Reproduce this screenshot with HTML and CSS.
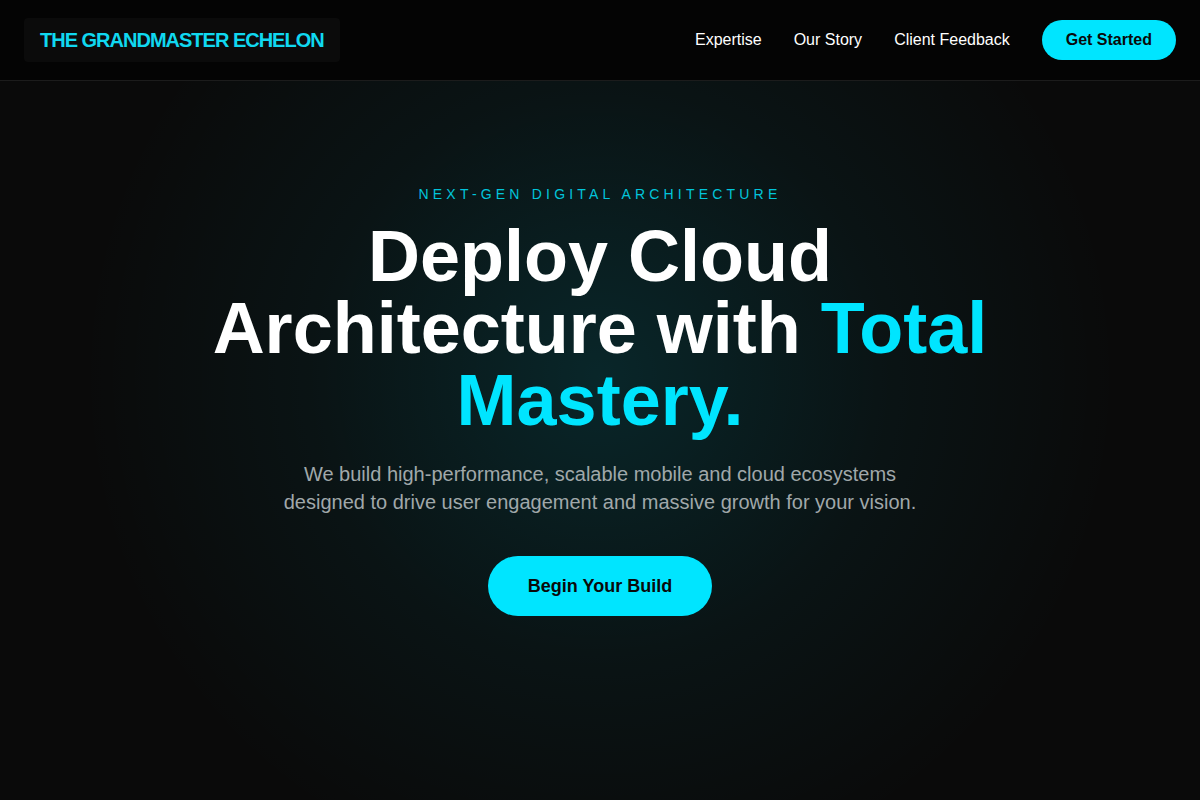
FILE: index.html
```html
<!DOCTYPE html>
<html lang="en">
<head>
  <meta charset="UTF-8" />
  <meta name="viewport" content="width=device-width, initial-scale=1.0"/>
  <title>The Grandmaster Echelon</title>
  <link rel="stylesheet" href="styles.css">
</head>
<body>
  <header class="navbar">
    <a class="logo" href="#">THE GRANDMASTER ECHELON</a>
    <nav class="nav-links">
      <a href="#expertise">Expertise</a>
      <a href="#story">Our Story</a>
      <a href="#feedback">Client Feedback</a>
      <a class="btn btn-small" href="#start">Get Started</a>
    </nav>
  </header>

  <section class="hero">
    <p class="eyebrow">Next-Gen Digital Architecture</p>
    <h1 class="hero-title">Deploy Cloud Architecture with <span class="accent">Total Mastery.</span></h1>
    <p class="hero-text">We build high-performance, scalable mobile and cloud ecosystems designed to drive user engagement and massive growth for your vision.</p>
    <a class="btn btn-large" href="#start">Begin Your Build</a>
  </section>
</body>
</html>
```

FILE: styles.css
```css
* {
  box-sizing: border-box;
}

body {
  margin: 0;
  background: #0a0a0a;
  color: #fff;
  font-family: 'Liberation Sans', Arial, sans-serif;
}

a {
  text-decoration: none;
  color: inherit;
}

.navbar {
  display: flex;
  justify-content: space-between;
  align-items: center;
  height: 81px;
  padding: 0 24px;
  background: #040404;
  border-bottom: 1px solid #1c1c1c;
}

.logo {
  display: block;
  padding: 12px 16px;
  background: #0b0b0b;
  border-radius: 4px;
  color: #10d8f0;
  font-size: 20px;
  font-weight: 700;
  letter-spacing: -1px;
  line-height: 20px;
}

.nav-links {
  display: flex;
  align-items: center;
  gap: 32px;
  font-size: 16px;
}

.btn {
  display: inline-block;
  background: #00e5ff;
  color: #0a0a0a;
  font-weight: 700;
  border-radius: 999px;
}

.btn-small {
  padding: 11px 24px;
  line-height: 18px;
}

/* hero with a soft cyan glow behind the copy */
.hero {
  display: flex;
  flex-direction: column;
  align-items: center;
  text-align: center;
  min-height: 719px;
  padding-top: 103px;
  background: radial-gradient(circle 520px at 50% 41%, rgba(0, 229, 255, 0.13) 0%, rgba(0, 229, 255, 0.045) 55%, rgba(0, 229, 255, 0) 100%), #0a0a0a;
}

.eyebrow {
  margin: 0 0 16px;
  font-size: 14px;
  line-height: 20px;
  letter-spacing: 4.2px;
  text-transform: uppercase;
  color: rgba(0, 229, 255, 0.85);
}

.hero-title {
  max-width: 800px;
  margin: 0 0 24px;
  font-size: 72px;
  line-height: 72px;
  font-weight: 700;
}

.accent {
  color: #00e5ff;
}

.hero-text {
  max-width: 640px;
  margin: 0 0 40px;
  font-size: 20px;
  line-height: 28px;
  color: #a0a8aa;
}

.btn-large {
  padding: 20px 40px;
  font-size: 18px;
  line-height: 20px;
}
```
